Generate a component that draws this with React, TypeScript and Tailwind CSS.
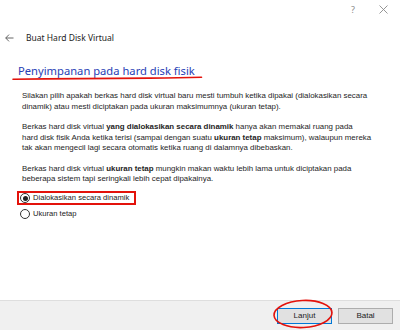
import React from "react";

const ui = { fontFamily: '"Noto Sans", "Open Sans", sans-serif' };
const body = { fontFamily: '"Liberation Sans", Arial, sans-serif' };

function Radio({ checked, label }: { checked?: boolean; label: string }) {
  return (
    <div className="h-[16px] flex items-center pl-[20px]">
      <div className="w-[10px] h-[10px] rounded-full border border-[#333] bg-white flex items-center justify-center">
        {checked && <div className="w-[5px] h-[5px] rounded-full bg-[#222]" />}
      </div>
      <span className="ml-[3px] text-[7.6px] text-[#222]" style={body}>
        {label}
      </span>
    </div>
  );
}

export default function App() {
  return (
    <div className="w-[400px] h-[330px] bg-white flex flex-col relative overflow-hidden">
      {/* window controls */}
      <div className="h-[19px] flex items-center justify-end pr-[12px] gap-[24px]">
        <span className="text-[9px] text-[#8a8a8a]" style={ui}>?</span>
        <svg width="9" height="9" viewBox="0 0 9 9">
          <path d="M0.5 0.5 L8.5 8.5 M8.5 0.5 L0.5 8.5" stroke="#8a8a8a" strokeWidth="0.9" />
        </svg>
      </div>

      {/* header */}
      <div className="h-[38px] flex items-center pl-[5px]">
        <svg width="9" height="8" viewBox="0 0 9 8">
          <path d="M8.5 4 H0.8 M4 0.6 L0.7 4 L4 7.4" stroke="#555" strokeWidth="0.9" fill="none" />
        </svg>
        <span className="ml-[12px] text-[8.5px] text-[#222]" style={ui}>
          Buat Hard Disk Virtual
        </span>
      </div>

      {/* heading */}
      <div className="h-[28px] flex items-center pl-[18px] relative">
        <span className="text-[11.2px] text-[#2740b5]" style={ui}>
          Penyimpanan pada hard disk fisik
        </span>
        <svg className="absolute left-0 top-0" width="210" height="28" viewBox="0 0 210 28">
          <path
            d="M13 22.3 C60 21.6 110 21.3 150 21.1 C175 21 192 20.6 201.5 20.3"
            stroke="#e3120b"
            strokeWidth="1.6"
            fill="none"
            strokeLinecap="round"
          />
        </svg>
      </div>

      {/* paragraphs */}
      <div className="pl-[22px] pt-[6px] text-[7.9px] leading-[10.5px] text-[#1e1e1e] whitespace-nowrap" style={body}>
        <div>
          <div>Silakan pilih apakah berkas hard disk virtual baru mesti tumbuh ketika dipakai (dialokasikan secara</div>
          <div>dinamik) atau mesti diciptakan pada ukuran maksimumnya (ukuran tetap).</div>
        </div>
        <div className="mt-[10px]">
          <div>
            Berkas hard disk virtual <b>yang dialokasikan secara dinamik</b> hanya akan memakai ruang pada
          </div>
          <div>
            hard disk fisik Anda ketika terisi (sampai dengan suatu <b>ukuran tetap</b> maksimum), walaupun mereka
          </div>
          <div>tak akan mengecil lagi secara otomatis ketika ruang di dalamnya dibebaskan.</div>
        </div>
        <div className="mt-[10px]">
          <div>
            Berkas hard disk virtual <b>ukuran tetap</b> mungkin makan waktu lebih lama untuk diciptakan pada
          </div>
          <div>beberapa sistem tapi seringkali lebih cepat dipakainya.</div>
        </div>
      </div>

      {/* radios */}
      <div className="mt-[5.5px] relative">
        <Radio checked label="Dialokasikan secara dinamik" />
        <Radio label="Ukuran tetap" />
        <div className="absolute left-[17px] top-[1px] w-[119px] h-[14px] border-2 border-[#e3120b]" />
      </div>

      <div className="flex-1" />

      {/* bottom bar */}
      <div className="h-[30px] bg-[#f0f0f0] border-t border-[#dedede] flex items-center justify-end pr-[7px] gap-[6px] relative">
        <button
          className="w-[55px] h-[16px] bg-[#e1e1e1] border border-[#0078d7] text-[8px] text-[#222] flex items-center justify-center"
          style={body}
        >
          Lanjut
        </button>
        <button
          className="w-[55px] h-[16px] bg-[#e1e1e1] border border-[#adadad] text-[8px] text-[#222] flex items-center justify-center"
          style={body}
        >
          Batal
        </button>
        <svg className="absolute left-[270px] top-[-3px]" width="66" height="33" viewBox="0 0 66 33">
          <ellipse
            cx="33"
            cy="16"
            rx="29"
            ry="13.5"
            stroke="#e3120b"
            strokeWidth="1.6"
            fill="none"
            transform="rotate(-3 33 16)"
          />
        </svg>
      </div>
    </div>
  );
}
